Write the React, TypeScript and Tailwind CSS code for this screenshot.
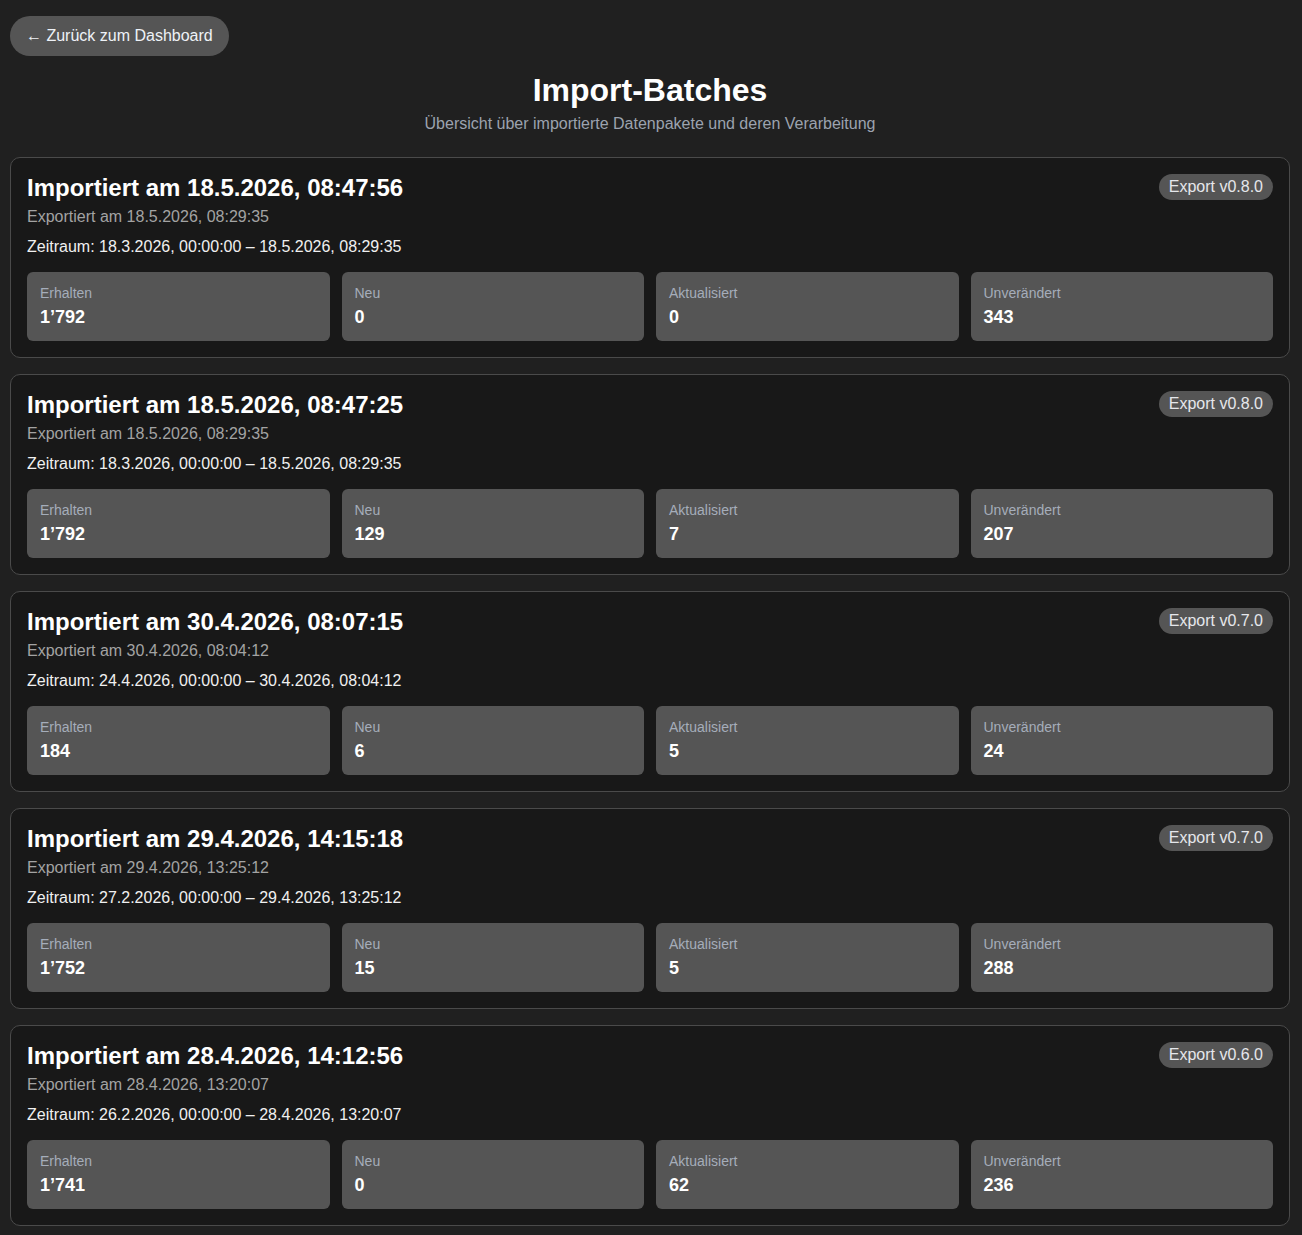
const BATCHES = [
  {
    imported: '18.5.2026, 08:47:56',
    exported: '18.5.2026, 08:29:35',
    range: '18.3.2026, 00:00:00 – 18.5.2026, 08:29:35',
    version: 'v0.8.0',
    stats: ['1’792', '0', '0', '343'],
  },
  {
    imported: '18.5.2026, 08:47:25',
    exported: '18.5.2026, 08:29:35',
    range: '18.3.2026, 00:00:00 – 18.5.2026, 08:29:35',
    version: 'v0.8.0',
    stats: ['1’792', '129', '7', '207'],
  },
  {
    imported: '30.4.2026, 08:07:15',
    exported: '30.4.2026, 08:04:12',
    range: '24.4.2026, 00:00:00 – 30.4.2026, 08:04:12',
    version: 'v0.7.0',
    stats: ['184', '6', '5', '24'],
  },
  {
    imported: '29.4.2026, 14:15:18',
    exported: '29.4.2026, 13:25:12',
    range: '27.2.2026, 00:00:00 – 29.4.2026, 13:25:12',
    version: 'v0.7.0',
    stats: ['1’752', '15', '5', '288'],
  },
  {
    imported: '28.4.2026, 14:12:56',
    exported: '28.4.2026, 13:20:07',
    range: '26.2.2026, 00:00:00 – 28.4.2026, 13:20:07',
    version: 'v0.6.0',
    stats: ['1’741', '0', '62', '236'],
  },
]

const LABELS = ['Erhalten', 'Neu', 'Aktualisiert', 'Unverändert']

export default function App() {
  return (
    <div className="min-h-screen bg-[#202020] pl-[10px] pr-3 pt-4 pb-4 text-[#f3f4f6] font-['Liberation_Sans',Arial,sans-serif]">
      <button className="h-10 px-4 rounded-full bg-[#555555] text-base text-[#eef2f7]">
        ← Zurück zum Dashboard
      </button>

      <div className="mt-[14px] mb-[21px] text-center">
        <h1 className="text-[32px] leading-10 font-bold text-white">Import-Batches</h1>
        <p className="mt-0.5 text-base leading-6 text-[#9ca3af]">
          Übersicht über importierte Datenpakete und deren Verarbeitung
        </p>
      </div>

      <div className="flex flex-col gap-4">
        {BATCHES.map((b, i) => (
          <div key={i} className="rounded-[10px] border border-[#4a4a4a] bg-[#181818] p-4">
            <div className="flex items-start justify-between">
              <div>
                <h2 className="text-2xl leading-7 font-bold text-white">Importiert am {b.imported}</h2>
                <p className="mt-[3px] text-base leading-6 text-[#a3a3a3]">Exportiert am {b.exported}</p>
                <p className="mt-1.5 text-base leading-6 text-[#f0f0f0]">Zeitraum: {b.range}</p>
              </div>
              <span className="rounded-full bg-[#555555] px-2.5 h-[26px] leading-[26px] text-base text-[#e5e7eb]">
                Export {b.version}
              </span>
            </div>

            <div className="mt-[13px] grid grid-cols-4 gap-3">
              {b.stats.map((v, j) => (
                <div key={j} className="rounded-md bg-[#555555] pl-[13px] pt-2.5 pb-3">
                  <div className="text-sm leading-[23px] text-[#a5adba]">{LABELS[j]}</div>
                  <div className="text-lg leading-6 font-bold text-white">{v}</div>
                </div>
              ))}
            </div>
          </div>
        ))}
      </div>
    </div>
  )
}
